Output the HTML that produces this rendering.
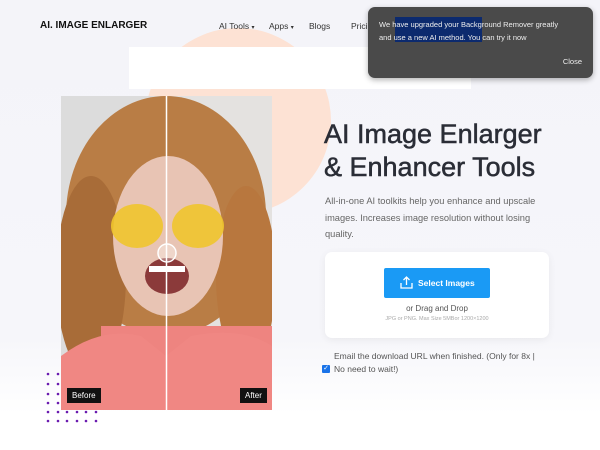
<!DOCTYPE html>
<html><head><style>
*{margin:0;padding:0;box-sizing:border-box}
body{width:600px;height:450px;overflow:hidden;font-family:"Liberation Sans",sans-serif;background:linear-gradient(#f4f4f9 0%,#f6f6fa 75%,#fff 92%);position:relative}
.abs{position:absolute}
</style></head><body>
<div class="abs" style="left:145px;top:28px;width:186px;height:186px;border-radius:50%;background:#fde2d4"></div>
<div class="abs" style="left:40px;top:20px;font-weight:bold;font-size:10px;color:#111">AI. IMAGE ENLARGER</div>
<div class="abs" style="left:219px;top:21px;font-size:8.5px;color:#333;white-space:nowrap">AI Tools <span style="font-size:6px">▾</span></div>
<div class="abs" style="left:269px;top:21px;font-size:8.5px;color:#333;white-space:nowrap">Apps <span style="font-size:6px">▾</span></div>
<div class="abs" style="left:309px;top:21px;font-size:8.5px;color:#333">Blogs</div>
<div class="abs" style="left:351px;top:21px;font-size:8.5px;color:#333">Prici</div>
<div class="abs" style="left:129px;top:47px;width:342px;height:42px;background:#fff"></div>
<div class="abs" style="left:368px;top:7px;width:225px;height:71px;background:#4a4a4a;border-radius:7px;box-shadow:0 2px 6px rgba(0,0,0,.3);color:#eee;font-size:7.5px;line-height:13px;padding:11px 11px">
<div class="abs" style="left:27px;top:10px;width:87px;height:25px;background:#0c2a6e"></div>
<div style="position:relative">We have upgraded your Background Remover greatly<br>and use a new AI method. You can try it now</div>
<div class="abs" style="right:11px;top:48px">Close</div></div>
<svg class="abs" style="left:61px;top:96px" width="211" height="314" viewBox="0 0 211 314">
<rect width="211" height="314" fill="#dcdcdc"/>
<rect x="105" width="106" height="314" fill="#e4e2e0"/>
<ellipse cx="105" cy="120" rx="100" ry="120" fill="#b97d45"/>
<ellipse cx="30" cy="180" rx="35" ry="100" fill="#a86c38"/>
<ellipse cx="185" cy="180" rx="30" ry="90" fill="#b8773e"/>
<ellipse cx="107" cy="140" rx="55" ry="80" fill="#e8c4b4"/>
<rect x="40" y="230" width="171" height="84" fill="#ee8480"/>
<path d="M0 260 Q40 230 80 240 L105 260 L130 240 Q180 230 211 250 L211 314 L0 314Z" fill="#f08783"/>
<ellipse cx="76" cy="130" rx="26" ry="22" fill="#f0c52c" opacity=".9"/>
<ellipse cx="137" cy="130" rx="26" ry="22" fill="#f0c52c" opacity=".9"/>
<ellipse cx="106" cy="180" rx="22" ry="18" fill="#8b3a3a"/>
<rect x="88" y="170" width="36" height="6" fill="#fff"/>
<line x1="105.5" y1="0" x2="105.5" y2="314" stroke="#fff" stroke-width="1.5"/>
<circle cx="106" cy="157" r="9" fill="rgba(255,255,255,.3)" stroke="#fff" stroke-width="1.5"/>
</svg>
<div class="abs" style="left:67px;top:388px;background:#111;color:#fff;font-size:8px;padding:3px 5px">Before</div>
<div class="abs" style="left:240px;top:388px;background:#111;color:#fff;font-size:8px;padding:3px 5px">After</div>
<svg class="abs" style="left:45px;top:371px" width="60" height="52">
<g fill="#6a1bb0">
<circle cx="3" cy="3" r="1.3"/><circle cx="13" cy="3" r="1.3"/>
<circle cx="3" cy="13" r="1.3"/><circle cx="13" cy="13" r="1.3"/>
<circle cx="3" cy="23" r="1.3"/><circle cx="13" cy="23" r="1.3"/>
<circle cx="3" cy="32" r="1.3"/><circle cx="13" cy="32" r="1.3"/>
<circle cx="3" cy="41" r="1.3"/><circle cx="13" cy="41" r="1.3"/><circle cx="22" cy="41" r="1.3"/><circle cx="32" cy="41" r="1.3"/><circle cx="41" cy="41" r="1.3"/><circle cx="51" cy="41" r="1.3"/>
<circle cx="3" cy="50" r="1.3"/><circle cx="13" cy="50" r="1.3"/><circle cx="22" cy="50" r="1.3"/><circle cx="32" cy="50" r="1.3"/><circle cx="41" cy="50" r="1.3"/><circle cx="51" cy="50" r="1.3"/>
</g></svg>
<div class="abs" style="left:324px;top:118px;font-size:27px;line-height:33px;color:#2a2d36;-webkit-text-stroke:.5px #2a2d36">AI Image Enlarger<br>&amp; Enhancer Tools</div>
<div class="abs" style="left:325px;top:193px;width:225px;font-size:9.3px;line-height:16.5px;color:#666">All-in-one AI toolkits help you enhance and upscale images. Increases image resolution without losing quality.</div>
<div class="abs" style="left:325px;top:252px;width:224px;height:86px;background:#fff;border-radius:7px;box-shadow:0 2px 8px rgba(0,0,0,.06)"></div>
<div class="abs" style="left:384px;top:268px;width:106px;height:30px;background:#1a9af5;border-radius:2px;color:#fff;font-size:8.5px;font-weight:bold;line-height:30px;padding-left:34px">Select Images</div>
<svg class="abs" style="left:400px;top:276px" width="13" height="13" viewBox="0 0 13 13" fill="none" stroke="#fff" stroke-width="1.3"><path d="M1 7v5h11V7M6.5 9V1M3.5 4l3-3 3 3"/></svg>
<div class="abs" style="left:325px;top:304px;width:224px;text-align:center;font-size:8px;color:#555">or Drag and Drop</div>
<div class="abs" style="left:325px;top:316px;width:224px;text-align:center;font-size:5.5px;color:#aaa">JPG or PNG. Max Size 5MBor 1200×1200</div>
<div class="abs" style="left:334px;top:351px;font-size:8.5px;color:#555">Email the download URL when finished. (Only for 8x |</div>
<div class="abs" style="left:322px;top:365px;width:8px;height:8px;background:#1a73e8;border-radius:1px;color:#fff;font-size:7px;line-height:8px;text-align:center">✓</div>
<div class="abs" style="left:334px;top:364px;font-size:8.5px;color:#555">No need to wait!)</div>
</body></html>
